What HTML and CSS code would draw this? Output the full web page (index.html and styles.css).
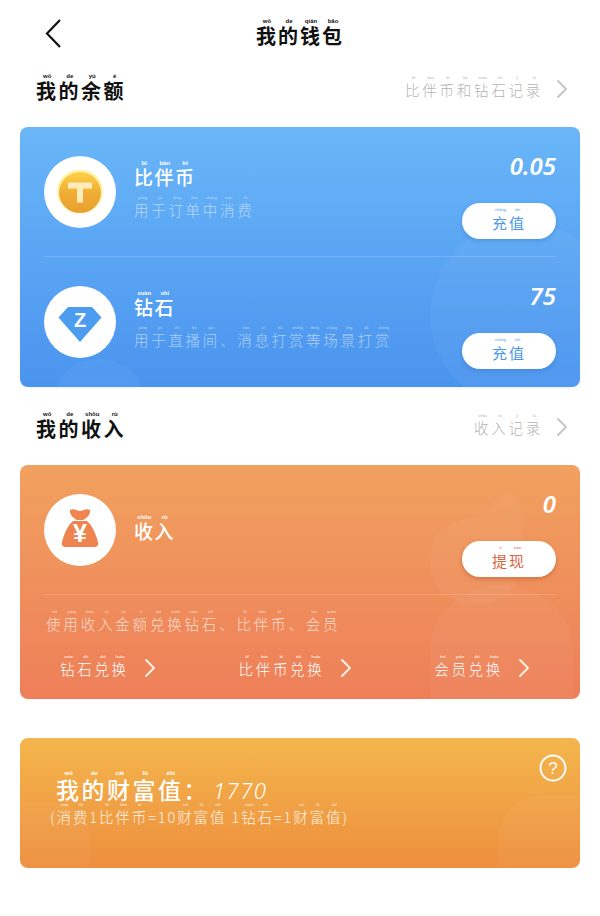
FILE: index.html
```html
<!DOCTYPE html>
<html lang="zh-CN">
<head>
<meta charset="utf-8">
<title>我的钱包</title>
<link rel="stylesheet" href="styles.css">
</head>
<body>
<div class="page">
  <header class="topbar">
    <svg class="back" viewBox="0 0 18 30"><path d="M16 2 3 15.500 16 29"/></svg>
    <h1 class="title"><ruby>我<rt>wǒ</rt></ruby><ruby>的<rt>de</rt></ruby><ruby>钱<rt>qián</rt></ruby><ruby>包<rt>bāo</rt></ruby></h1>
  </header>

  <section class="sec-head sec-first">
    <h2 class="sec-title"><ruby>我<rt>wǒ</rt></ruby><ruby>的<rt>de</rt></ruby><ruby>余<rt>yú</rt></ruby><ruby>额<rt>é</rt></ruby></h2>
    <div class="record"><span class="record-text"><ruby>比<rt>bǐ</rt></ruby><ruby>伴<rt>bàn</rt></ruby><ruby>币<rt>bì</rt></ruby><ruby>和<rt>hé</rt></ruby><ruby>钻<rt>zuàn</rt></ruby><ruby>石<rt>shí</rt></ruby><ruby>记<rt>jì</rt></ruby><ruby>录<rt>lù</rt></ruby></span>
      <svg class="chev chev-gray" viewBox="0 0 12 20"><path d="M2 2 10 10 2 18"/></svg></div>
  </section>

  <section class="card card-blue">
    <span class="deco deco-blue-a"></span>
    <span class="deco deco-blue-b"></span>
    <div class="row">
      <div class="avatar">
        <svg class="icon" viewBox="0 0 72 72">
          <defs>
            <linearGradient id="coin" x1="0" y1="0" x2="0" y2="1"><stop offset="0" stop-color="#fbd24a"/><stop offset=".5" stop-color="#f0ad35"/><stop offset="1" stop-color="#e8a02e"/></linearGradient>
          </defs>
          <ellipse cx="36" cy="35.500" rx="23" ry="22" fill="#fff2a8"/>
          <ellipse cx="36" cy="36.500" rx="21" ry="20.500" fill="url(#coin)"/>
          <path d="M24 26.500h24v6h-9v14h-6v-14h-9z" fill="#fdebb9"/>
        </svg>
      </div>
      <div class="info">
        <div class="name"><ruby>比<rt>bǐ</rt></ruby><ruby>伴<rt>bàn</rt></ruby><ruby>币<rt>bì</rt></ruby></div>
        <div class="desc"><ruby>用<rt>yòng</rt></ruby><ruby>于<rt>yú</rt></ruby><ruby>订<rt>dìng</rt></ruby><ruby>单<rt>dān</rt></ruby><ruby>中<rt>zhōng</rt></ruby><ruby>消<rt>xiāo</rt></ruby><ruby>费<rt>fèi</rt></ruby></div>
      </div>
      <div class="side">
        <div class="amount">0.05</div>
        <button class="pill pill-blue"><ruby>充<rt>chōng</rt></ruby><ruby>值<rt>zhí</rt></ruby></button>
      </div>
    </div>
    <div class="rule"></div>
    <div class="row">
      <div class="avatar">
        <svg class="icon" viewBox="0 0 72 72">
          <path d="M24 21h24l9.500 10.500L36 56 14.500 31.500z" fill="#4c9cf0"/>
          <text class="icon-z" x="36" y="41" text-anchor="middle">Z</text>
        </svg>
      </div>
      <div class="info">
        <div class="name"><ruby>钻<rt>zuàn</rt></ruby><ruby>石<rt>shí</rt></ruby></div>
        <div class="desc"><ruby>用<rt>yòng</rt></ruby><ruby>于<rt>yú</rt></ruby><ruby>直<rt>zhí</rt></ruby><ruby>播<rt>bō</rt></ruby><ruby>间<rt>jiān</rt></ruby>、<ruby>消<rt>xiāo</rt></ruby><ruby>息<rt>xī</rt></ruby><ruby>打<rt>dǎ</rt></ruby><ruby>赏<rt>shǎng</rt></ruby><ruby>等<rt>děng</rt></ruby><ruby>场<rt>chǎng</rt></ruby><ruby>景<rt>jǐng</rt></ruby><ruby>打<rt>dǎ</rt></ruby><ruby>赏<rt>shǎng</rt></ruby></div>
      </div>
      <div class="side">
        <div class="amount">75</div>
        <button class="pill pill-blue"><ruby>充<rt>chōng</rt></ruby><ruby>值<rt>zhí</rt></ruby></button>
      </div>
    </div>
  </section>

  <section class="sec-head sec-second">
    <h2 class="sec-title"><ruby>我<rt>wǒ</rt></ruby><ruby>的<rt>de</rt></ruby><ruby>收<rt>shōu</rt></ruby><ruby>入<rt>rù</rt></ruby></h2>
    <div class="record"><span class="record-text"><ruby>收<rt>shōu</rt></ruby><ruby>入<rt>rù</rt></ruby><ruby>记<rt>jì</rt></ruby><ruby>录<rt>lù</rt></ruby></span>
      <svg class="chev chev-gray" viewBox="0 0 12 20"><path d="M2 2 10 10 2 18"/></svg></div>
  </section>

  <section class="card card-orange">
    <span class="deco deco-orange-a"></span>
    <span class="deco deco-orange-b"></span>
    <div class="row">
      <div class="avatar">
        <svg class="icon" viewBox="0 0 72 72">
          <path d="M26 16c4-2 7 1 10 1s6-3 10-1c1 4-4 9-7 10h-6c-3-1-8-6-7-10z" fill="#ee8450"/>
          <path d="M29 27h14c5 4 9 13 11 21 1 3-1 5-4 5H22c-3 0-5-2-4-5 2-8 6-17 11-21z" fill="#ee8450"/>
          <text class="icon-yen" x="36" y="48" text-anchor="middle">¥</text>
        </svg>
      </div>
      <div class="info info-center">
        <div class="name"><ruby>收<rt>shōu</rt></ruby><ruby>入<rt>rù</rt></ruby></div>
      </div>
      <div class="side">
        <div class="amount">0</div>
        <button class="pill pill-orange"><ruby>提<rt>tí</rt></ruby><ruby>现<rt>xiàn</rt></ruby></button>
      </div>
    </div>
    <div class="rule"></div>
    <p class="note"><ruby>使<rt>shǐ</rt></ruby><ruby>用<rt>yòng</rt></ruby><ruby>收<rt>shōu</rt></ruby><ruby>入<rt>rù</rt></ruby><ruby>金<rt>jīn</rt></ruby><ruby>额<rt>é</rt></ruby><ruby>兑<rt>duì</rt></ruby><ruby>换<rt>huàn</rt></ruby><ruby>钻<rt>zuàn</rt></ruby><ruby>石<rt>shí</rt></ruby>、<ruby>比<rt>bǐ</rt></ruby><ruby>伴<rt>bàn</rt></ruby><ruby>币<rt>bì</rt></ruby>、<ruby>会<rt>huì</rt></ruby><ruby>员<rt>yuán</rt></ruby></p>
    <div class="links">
      <a class="link"><span><ruby>钻<rt>zuàn</rt></ruby><ruby>石<rt>shí</rt></ruby><ruby>兑<rt>duì</rt></ruby><ruby>换<rt>huàn</rt></ruby></span><svg class="chev chev-white" viewBox="0 0 12 20"><path d="M2 2 10 10 2 18"/></svg></a>
      <a class="link"><span><ruby>比<rt>bǐ</rt></ruby><ruby>伴<rt>bàn</rt></ruby><ruby>币<rt>bì</rt></ruby><ruby>兑<rt>duì</rt></ruby><ruby>换<rt>huàn</rt></ruby></span><svg class="chev chev-white" viewBox="0 0 12 20"><path d="M2 2 10 10 2 18"/></svg></a>
      <a class="link"><span><ruby>会<rt>huì</rt></ruby><ruby>员<rt>yuán</rt></ruby><ruby>兑<rt>duì</rt></ruby><ruby>换<rt>huàn</rt></ruby></span><svg class="chev chev-white" viewBox="0 0 12 20"><path d="M2 2 10 10 2 18"/></svg></a>
    </div>
  </section>

  <section class="card card-gold">
    <span class="deco deco-gold-a"></span>
    <span class="deco deco-gold-b"></span>
    <svg class="help" viewBox="0 0 28 28"><circle cx="14" cy="14" r="12.500"/><text x="14" y="20" text-anchor="middle">?</text></svg>
    <div class="wealth"><ruby>我<rt>wǒ</rt></ruby><ruby>的<rt>de</rt></ruby><ruby>财<rt>cái</rt></ruby><ruby>富<rt>fù</rt></ruby><ruby>值<rt>zhí</rt></ruby>：<span class="wealth-num">1770</span></div>
    <div class="wealth-note">(<ruby>消<rt>xiāo</rt></ruby><ruby>费<rt>fèi</rt></ruby>1<ruby>比<rt>bǐ</rt></ruby><ruby>伴<rt>bàn</rt></ruby><ruby>币<rt>bì</rt></ruby>=10<ruby>财<rt>cái</rt></ruby><ruby>富<rt>fù</rt></ruby><ruby>值<rt>zhí</rt></ruby> 1<ruby>钻<rt>zuàn</rt></ruby><ruby>石<rt>shí</rt></ruby>=1<ruby>财<rt>cái</rt></ruby><ruby>富<rt>fù</rt></ruby><ruby>值<rt>zhí</rt></ruby>)</div>
  </section>
</div>
</body>
</html>
```

FILE: styles.css
```css
* { box-sizing: border-box; }
html, body { margin: 0; padding: 0; background: #fff; }
body {
  width: 600px;
  height: 916px;
  overflow: hidden;
  font-family: "Noto Sans CJK SC", "Noto Sans", sans-serif;
  color: #111;
}
.page { padding: 0 20px; }
h1, h2, p { margin: 0; font-weight: inherit; font-size: inherit; }
ruby { ruby-position: over; }
rt { position: relative; top: -2px; font-family: "Liberation Sans", sans-serif; font-size: 6px; font-weight: 700; line-height: 6px; letter-spacing: 0; }
.desc rt, .record-text rt, .note rt, .link rt, .wealth-note rt, .pill rt { top: -3px; font-size: 4px; line-height: 4px; font-weight: 400; }

.topbar { height: 66px; display: flex; align-items: center; justify-content: center; position: relative; }
.back { position: absolute; left: 24px; top: 18px; width: 18px; height: 30px; fill: none; stroke: #111; stroke-width: 2.200; }
.title { font-size: 20px; font-weight: 700; letter-spacing: 2px; line-height: 26px; margin-top: 2px; }

.sec-head { display: flex; align-items: center; justify-content: space-between; height: 30px; padding: 0 12px 0 16px; }
.sec-first { margin-top: 8px; margin-bottom: 23px; }
.sec-second { margin-top: 25px; margin-bottom: 23px; }
.sec-title { font-size: 20px; font-weight: 700; letter-spacing: 2.500px; line-height: 26px; color: #111; }
.record { display: flex; align-items: center; gap: 13px; color: #b4b4b4; }
.record-text { font-size: 14.500px; letter-spacing: 2.750px; font-weight: 300; line-height: 20px; }
.chev { fill: none; stroke-linecap: round; stroke-linejoin: round; }
.chev-gray { width: 12px; height: 20px; stroke: #c4c4c4; stroke-width: 1.800; }
.chev-white { width: 12px; height: 20px; stroke: #fdeee2; stroke-width: 2; }

.card { position: relative; overflow: hidden; border-radius: 8px; color: #fff; }
.card-blue { height: 260px; padding: 0 24px; background: linear-gradient(180deg, #6ab6f8 0%, #4a94ef 100%); box-shadow: 0 1px 3px rgba(80, 150, 230, .12); }
.card-orange { height: 234px; margin: 0; padding: 0 24px; background: linear-gradient(180deg, #f1a15f 0%, #ee7f59 100%); }
.card-gold { height: 130px; margin-top: 39px; padding: 34px 0 0 30px; background: linear-gradient(180deg, #f4b64c 0%, #ee8e3e 100%); }

.deco { position: absolute; display: block; background: rgba(255, 255, 255, .04); }
.deco-blue-a { right: -36px; top: 95px; width: 186px; height: 186px; border-radius: 50%; }
.deco-blue-b { left: 36px; top: 232px; width: 86px; height: 70px; border-radius: 50% 50% 0 0; }
.deco-orange-a { left: 410px; top: 25px; width: 95px; height: 115px; clip-path: path("M78 2 C90 2 95 30 93 60 C92 85 80 115 50 115 C20 115 0 100 0 70 C0 40 25 30 45 28 C60 26 65 4 78 2 Z"); }
.deco-orange-b { right: 7px; top: 120px; width: 143px; height: 130px; border-radius: 50% 50% 0 0; }
.deco-gold-a { left: 0; top: 65px; width: 70px; height: 70px; border-radius: 0 50% 0 0; }
.deco-gold-b { right: -12px; top: 57px; width: 94px; height: 90px; border-radius: 50% 0 0 0; }

.row { position: relative; display: flex; height: 129px; padding-top: 29px; }
.rule { position: relative; height: 1px; background: rgba(255, 255, 255, .16); }
.avatar { width: 72px; height: 72px; border-radius: 50%; background: #fff; flex: none; }
.icon { display: block; width: 72px; height: 72px; }
.icon-z { font-family: "Liberation Sans", sans-serif; font-size: 20px; font-weight: 700; fill: #fff; }
.icon-yen { font-family: "Liberation Sans", sans-serif; font-size: 25px; font-weight: 700; fill: #fff; }

.info { margin-left: 18px; padding-top: 6px; }
.info-center { padding-top: 22px; }
.name { font-size: 19px; font-weight: 500; letter-spacing: 1.500px; line-height: 28px; height: 28px; }
.desc { margin-top: 8px; font-size: 14.500px; font-weight: 300; letter-spacing: 2.700px; line-height: 20px; height: 20px; color: rgba(255, 255, 255, .55); white-space: nowrap; }
.side { margin-left: auto; display: flex; flex-direction: column; align-items: flex-end; }
.amount { font-family: "Noto Sans", sans-serif; font-style: italic; font-weight: 600; font-size: 24px; line-height: 26px; height: 26px; margin-top: -3px; }
.pill { margin-top: 24px; width: 94px; height: 36px; border: 0; border-radius: 18px; background: #fff; font-family: inherit; font-size: 15px; letter-spacing: 2px; font-weight: 400; line-height: 20px; padding: 3px 0 0; }
.pill-blue { color: #4a98ea; box-shadow: 0 2px 4px rgba(40, 100, 180, .3); }
.pill-orange { color: #d9663f; box-shadow: 0 2px 4px rgba(170, 80, 40, .45); }

.note { position: relative; margin: 17px 0 0 2px; font-size: 14.500px; font-weight: 300; letter-spacing: 2.800px; line-height: 20px; height: 20px; color: rgba(255, 255, 255, .72); white-space: nowrap; }
.links { position: relative; display: flex; justify-content: space-between; margin-top: 25px; padding: 0 26px 0 16px; }
.link { display: flex; align-items: center; gap: 15px; font-size: 14.500px; letter-spacing: 2.700px; line-height: 20px; font-weight: 300; color: #fff; }

.help { position: absolute; right: 13px; top: 16px; width: 28px; height: 28px; }
.help circle { fill: none; stroke: #fff; stroke-width: 2; }
.help text { font-family: "Liberation Sans", sans-serif; font-size: 17px; fill: #fff; }

.wealth { position: relative; margin-left: 6px; font-size: 23px; font-weight: 500; letter-spacing: 2.500px; line-height: 28px; height: 28px; white-space: nowrap; }
.wealth-num { font-family: "Noto Sans", sans-serif; font-style: italic; font-weight: 300; font-size: 22px; letter-spacing: 1.500px; margin-left: 4px; }
.wealth-note { position: relative; margin-top: 5px; font-size: 14.500px; font-weight: 300; letter-spacing: 1.900px; line-height: 20px; height: 20px; white-space: nowrap; color: #fdf3e6; }
```
